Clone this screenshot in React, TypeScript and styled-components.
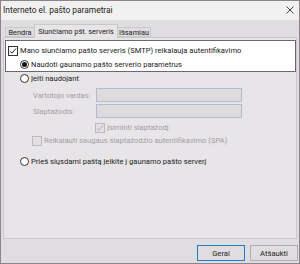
import styled, { createGlobalStyle } from "styled-components";

const GlobalStyle = createGlobalStyle`
  html, body {
    margin: 0;
    padding: 0;
    background: #ffffff;
  }

  * {
    box-sizing: border-box;
  }
`;

const Window = styled.div`
  width: 300px;
  height: 264px;
  border: 1px solid #8d838c;
  display: flex;
  flex-direction: column;
  font-family: Roboto, "Noto Sans", sans-serif;
  font-size: 7.6px;
  color: #1c1c1c;
  background: #dfdddf;
`;

const TitleBar = styled.div`
  height: 19px;
  background: #f2f1f2;
  display: flex;
  align-items: center;
  justify-content: space-between;
  padding: 0 5px 2px 2px;
`;

const Title = styled.span`
  font-size: 8.4px;
  color: #222;
`;

const Body = styled.div`
  flex: 1;
  padding: 4px 1px 0 2px;
  display: flex;
  flex-direction: column;
`;

const TabRow = styled.div`
  display: flex;
  align-items: flex-end;
  height: 13px;
  padding-left: 3px;
  position: relative;
  z-index: 1;
`;

const Tab = styled.div<{ $active?: boolean; $width: number }>`
  width: ${(p) => p.$width}px;
  height: ${(p) => (p.$active ? "14px" : "10px")};
  margin-bottom: ${(p) => (p.$active ? "-1px" : "0")};
  display: flex;
  align-items: center;
  justify-content: center;
  white-space: nowrap;
  border: 1px solid #cac8ca;
  border-bottom: ${(p) => (p.$active ? "none" : "1px solid #cac8ca")};
  background: ${(p) => (p.$active ? "#e7e5e7" : "#dedcde")};
  margin-left: -1px;
  font-size: ${(p) => (p.$active ? "7.3px" : "7.4px")};
`;

const Panel = styled.div`
  width: 294px;
  height: 202px;
  border: 1px solid #cac8ca;
  background: #e7e5e7;
  padding: 2px 0 0 1px;
`;

const FocusBox = styled.div`
  width: 291px;
  height: 32px;
  border: 1px solid #6e6670;
  background: #ffffff;
  padding: 4px 0 0 2px;
  display: flex;
  flex-direction: column;
  gap: 3px;
`;

const Row = styled.label<{ $indent?: number; $disabled?: boolean }>`
  display: flex;
  align-items: center;
  gap: 2px;
  height: 11px;
  padding-left: ${(p) => p.$indent ?? 0}px;
  color: ${(p) => (p.$disabled ? "#a29ea2" : "inherit")};
  white-space: nowrap;
`;

const Box = styled.span<{ $disabled?: boolean }>`
  width: 10px;
  height: 10px;
  border: 1px solid ${(p) => (p.$disabled ? "#bdbabd" : "#333")};
  background: ${(p) => (p.$disabled ? "#e2e0e2" : "#fff")};
  display: inline-flex;
  align-items: center;
  justify-content: center;
  flex: none;
`;

const Radio = styled.span<{ $on?: boolean }>`
  width: 9px;
  height: 9px;
  border-radius: 50%;
  border: 1px solid #333;
  background: #fff;
  display: inline-flex;
  align-items: center;
  justify-content: center;
  flex: none;

  &::after {
    content: "";
    width: 5px;
    height: 5px;
    border-radius: 50%;
    background: ${(p) => (p.$on ? "#111" : "transparent")};
  }
`;

const Section = styled.div`
  display: flex;
  flex-direction: column;
`;

const FieldRow = styled.div`
  display: flex;
  align-items: center;
  padding-left: 28px;
  height: 14px;
  color: #a29ea2;
`;

const FieldLabel = styled.span`
  width: 63px;
`;

const Field = styled.div`
  width: 146px;
  height: 14px;
  border: 1px solid #b3bccb;
  background: #dddbdd;
`;

const Footer = styled.div`
  display: flex;
  justify-content: flex-end;
  gap: 5px;
  padding: 6px 0 0;
`;

const Button = styled.button<{ $primary?: boolean }>`
  width: 48px;
  height: 16px;
  border: 1px solid ${(p) => (p.$primary ? "#1f7ad0" : "#b0aeb0")};
  background: #dfdddf;
  font: inherit;
  color: #222;
  padding: 0;
`;

function Check({ disabled, checked }: { disabled?: boolean; checked?: boolean }) {
  return (
    <Box $disabled={disabled}>
      {checked && (
        <svg width="8" height="8" viewBox="0 0 8 8">
          <path
            d="M1 4.2 L3 6.2 L7 1.5"
            fill="none"
            stroke={disabled ? "#b5b2b5" : "#222"}
            strokeWidth="1"
          />
        </svg>
      )}
    </Box>
  );
}

export default function App() {
  return (
    <>
      <GlobalStyle />
      <Window>
        <TitleBar>
          <Title>Interneto el. pašto parametrai</Title>
          <svg width="8" height="8" viewBox="0 0 8 8">
            <path d="M0.5 0.5 L7.5 7.5 M7.5 0.5 L0.5 7.5" stroke="#444" strokeWidth="1" />
          </svg>
        </TitleBar>
        <Body>
          <TabRow>
            <Tab $width={30}>Bendra</Tab>
            <Tab $active $width={84}>
              Siunčiamo pšt. serveris
            </Tab>
            <Tab $width={34}>Išsamiau</Tab>
          </TabRow>
          <Panel>
            <FocusBox>
              <Row>
                <Check checked />
                Mano siunčiamo pašto serveris (SMTP) reikalauja autentifikavimo
              </Row>
              <Row $indent={12}>
                <Radio $on />
                Naudoti gaunamo pašto serverio parametrus
              </Row>
            </FocusBox>
            <Section>
              <Row $indent={15} style={{ marginTop: 1 }}>
                <Radio />
                Įeiti naudojant
              </Row>
              <FieldRow style={{ marginTop: 4 }}>
                <FieldLabel>Vartotojo vardas:</FieldLabel>
                <Field />
              </FieldRow>
              <FieldRow style={{ marginTop: 2 }}>
                <FieldLabel>Slaptažodis:</FieldLabel>
                <Field />
              </FieldRow>
              <Row $indent={90} $disabled style={{ marginTop: 4 }}>
                <Check disabled checked />
                Įsiminti slaptažodį
              </Row>
              <Row $indent={27} $disabled style={{ marginTop: 2 }}>
                <Check disabled />
                Reikalauti saugaus slaptažodžio autentifikavimo (SPA)
              </Row>
              <Row $indent={15} style={{ marginTop: 10 }}>
                <Radio />
                Prieš siųsdami paštą įeikite į gaunamo pašto serverį
              </Row>
            </Section>
          </Panel>
          <Footer>
            <Button $primary>Gerai</Button>
            <Button>Atšaukti</Button>
          </Footer>
        </Body>
      </Window>
    </>
  );
}
